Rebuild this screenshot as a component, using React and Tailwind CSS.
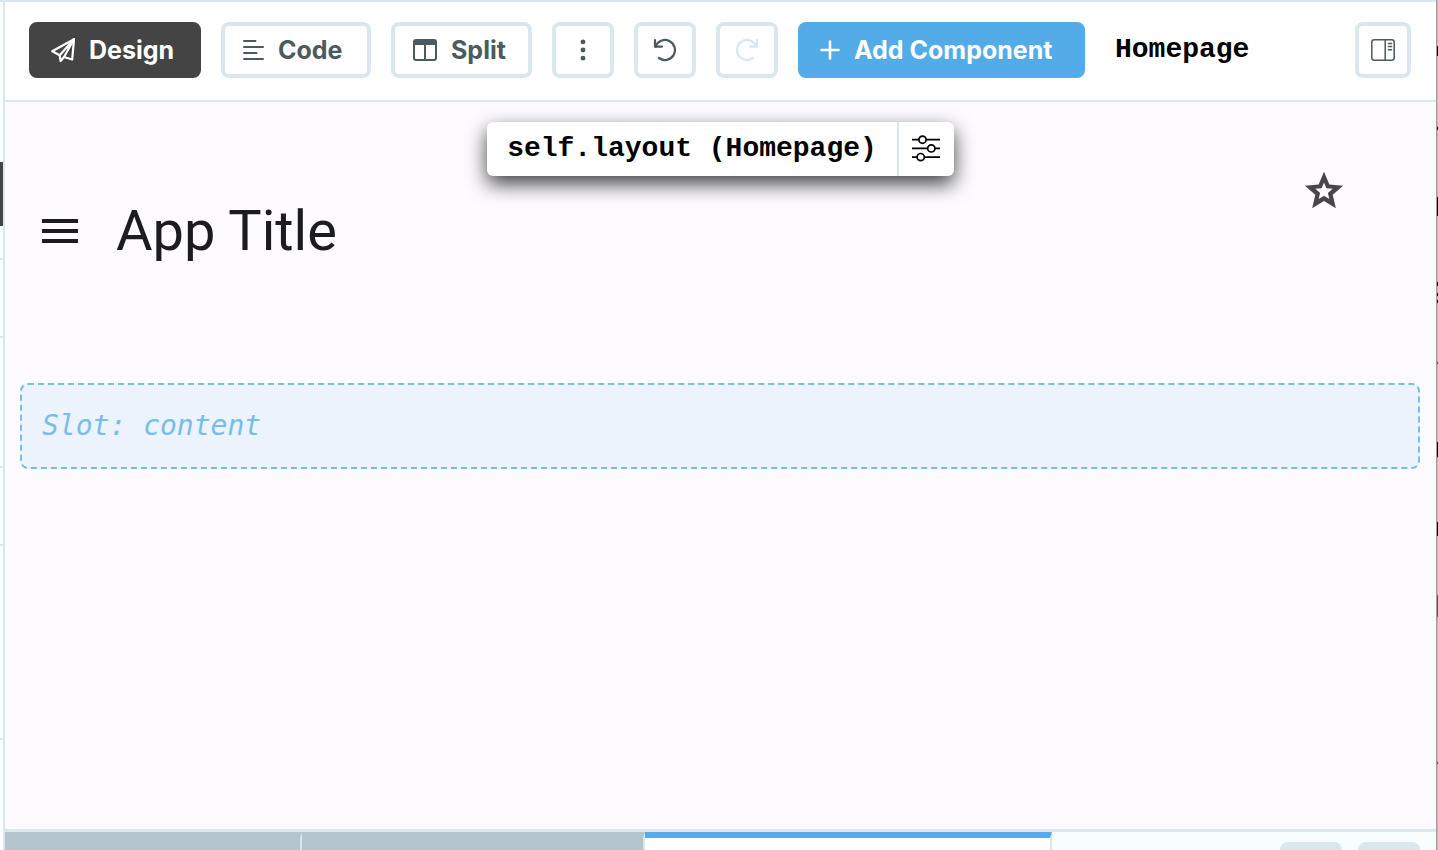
import React, { useState } from "react";
import { BsThreeDotsVertical } from "react-icons/bs";
import { MdMenu } from "react-icons/md";

const SendIcon = () => (
  <svg width="24" height="24" viewBox="0 0 24 24" fill="none" stroke="currentColor" strokeWidth="2.2" strokeLinejoin="round" strokeLinecap="round">
    <path d="M23 1.2 1.2 13.3 8.7 17.3 9.6 23 13 19 21.2 21.5Z" />
    <path d="M23 1.2 8.7 17.3M23 1.2 13 19" />
  </svg>
);

const CodeIcon = () => (
  <svg width="21" height="24" viewBox="0 0 21 24" fill="none" stroke="currentColor" strokeWidth="2" strokeLinecap="round">
    <path d="M1 3h11.5M1 9h19M1 15h12.5M1 21h19" />
  </svg>
);

const SplitIcon = () => (
  <svg width="24" height="24" viewBox="0 0 24 24" fill="none" stroke="currentColor" strokeWidth="2">
    <rect x="1" y="2" width="22" height="20" rx="2" />
    <path d="M1 5h22" strokeWidth="4" />
    <path d="M12 5v17" />
  </svg>
);

const UndoIcon = ({ className }) => (
  <svg className={className} width="24" height="24" viewBox="0 0 24 24" fill="none" stroke="currentColor" strokeWidth="2.2" strokeLinecap="round" strokeLinejoin="round">
    <path d="M2 2v6.6h7" />
    <path d="M2.6 8.6A10 10 0 1 1 6 20" />
  </svg>
);

const PlusIcon = () => (
  <svg width="20" height="24" viewBox="0 0 20 24" fill="none" stroke="currentColor" strokeWidth="2.6" strokeLinecap="round">
    <path d="M1.5 12h17M10 3.5v17" />
  </svg>
);

const SidebarIcon = () => (
  <svg width="24" height="24" viewBox="0 0 24 24" fill="none" stroke="currentColor" strokeWidth="1.5" strokeLinecap="round">
    <rect x="0.8" y="1.8" width="22.4" height="20.4" rx="2.4" />
    <path d="M14.2 2v20M17.4 5.4h3.2M17.4 8.6h3.2M17.4 11.8h3.2" />
  </svg>
);

const SlidersIcon = () => (
  <svg width="28" height="28" viewBox="0 0 28 28" fill="#fff" stroke="currentColor" strokeWidth="1.7">
    <path d="M0 4.7h28M0 13.4h28M0 22.1h28" />
    <circle cx="10.5" cy="4.7" r="3.6" />
    <circle cx="19.3" cy="13.4" r="3.6" />
    <circle cx="8.7" cy="22.1" r="3.6" />
  </svg>
);

const StarIcon = () => (
  <svg width="46" height="46" viewBox="0 0 24 24" fill="currentColor" fillRule="evenodd">
    <path d="M22 9.24 14.81 8.62 12 2 9.19 8.63 2 9.24 7.46 13.97 5.82 21 12 17.27 18.18 21 16.55 13.97ZM16.5 10.87 13.26 10.59 12 7.6 10.74 10.59 7.5 10.87 9.96 13 9.22 16.16 12 14.48 14.78 16.16 14.05 13Z" />
  </svg>
);

const views = [
  { name: "Design", icon: <SendIcon />, width: "w-[172px]" },
  { name: "Code", icon: <CodeIcon />, width: "w-[150px]" },
  { name: "Split", icon: <SplitIcon />, width: "w-[141px]" },
];

const iconButton =
  "flex h-14 w-[62px] shrink-0 items-center justify-center rounded-lg border-4 border-[#dae7ec] bg-white";

const Toolbar = () => {
  const [view, setView] = useState("Design");

  return (
    <header className="flex h-[102px] shrink-0 items-center gap-5 border-y-2 border-[#dae7ec] bg-white pr-[25px] pb-[2px] pl-6 text-[#4c5a60]">
      {views.map((item) => (
        <button
          key={item.name}
          type="button"
          onClick={() => setView(item.name)}
          className={`flex h-14 shrink-0 items-center gap-[14px] rounded-lg border-4 pl-[18px] text-[25px] leading-8 font-bold ${item.width} ${
            view === item.name
              ? "border-[#444444] bg-[#444444] text-white"
              : "border-[#dae7ec] bg-white"
          }`}
        >
          {item.icon}
          {item.name}
        </button>
      ))}
      <button type="button" aria-label="More" className={iconButton}>
        <BsThreeDotsVertical size={26} />
      </button>
      <button type="button" aria-label="Undo" className={iconButton}>
        <UndoIcon />
      </button>
      <button type="button" aria-label="Redo" disabled className={`${iconButton} text-[#dae7ec]`}>
        <UndoIcon className="-scale-x-100" />
      </button>
      <button
        type="button"
        className="flex h-14 w-[287px] shrink-0 items-center gap-[14px] rounded-lg bg-[#53ace8] pl-[22px] text-[25px] leading-8 font-bold whitespace-nowrap text-white"
      >
        <PlusIcon />
        Add Component
      </button>
      <h1 className="ml-[10px] font-['Liberation_Mono',monospace] text-[28px] leading-8 font-bold text-black">
        Homepage
      </h1>
      <button
        type="button"
        aria-label="Toggle sidebar"
        className="ml-auto flex size-14 shrink-0 items-center justify-center rounded-lg border-4 border-[#dae7ec] bg-white"
      >
        <SidebarIcon />
      </button>
    </header>
  );
};

const Designer = () => (
  <main className="relative min-h-0 flex-1 bg-[#fdfbff]">
    <div className="absolute inset-x-0 top-5 flex justify-center">
      <div className="flex h-[54px] rounded-md bg-white font-['Liberation_Mono',monospace] text-[28px] font-bold text-black shadow-[0_8px_20px_rgba(0,0,0,0.75)]">
        <span className="flex items-center border-r-2 border-[#dae7ec] px-5">
          self.layout (Homepage)
        </span>
        <button type="button" aria-label="Properties" className="flex w-[55px] items-center justify-center">
          <SlidersIcon />
        </button>
      </div>
    </div>

    <div className="flex h-[281px] items-start pt-[66px] pr-[89px] pl-[31px] font-[Roboto,sans-serif] text-[#1c1b1f]">
      <div className="mt-[39px] flex h-12 items-center gap-8">
        <button type="button" aria-label="Menu">
          <MdMenu size={48} />
        </button>
        <h2 className="text-[56px] leading-none">App Title</h2>
      </div>
      <button type="button" aria-label="Favorite" className="ml-auto text-[#49454f]">
        <StarIcon />
      </button>
    </div>

    <div className="mr-4 ml-[15px] flex h-[86px] items-center rounded-lg border-2 border-dashed border-[#77bdeb] bg-[#ebf3fc] px-5 font-['DejaVu_Sans_Mono',monospace] text-[28px] text-[#77bdeb] italic">
      Slot: content
    </div>
  </main>
);

const BottomTabs = () => (
  <footer className="flex h-[21px] shrink-0 overflow-hidden border-t-[3px] border-[#dae7ec] bg-[#f8fdff]">
    <div className="w-[297px] border-t-6 border-r-2 border-t-[#b4c4cc] border-r-[#dae7ec] bg-[#b4c4cc]" />
    <div className="w-[343px] border-t-6 border-r-2 border-t-[#b4c4cc] border-r-[#dae7ec] bg-[#b4c4cc]" />
    <div className="w-[407px] border-t-6 border-r-2 border-t-[#53ace8] border-r-[#dae7ec] bg-white" />
    <div className="ml-auto flex gap-4 pt-[10px] pr-4">
      <div className="h-14 w-[62px] rounded-lg bg-[#dae7ec]" />
      <div className="h-14 w-[62px] rounded-lg bg-[#dae7ec]" />
    </div>
  </footer>
);

// edge of the component tree that sits behind the designer
const TreeEdge = () => (
  <aside className="flex w-[5px] shrink-0 flex-col border-r-2 border-[#dae7ec] bg-[#fbfeff]">
    <div className="h-[2px] bg-[#dae7ec]" />
    <div className="h-40" />
    <div className="h-16 bg-[#444444]" />
    <div className="h-[34px] border-b-2 border-[#dae7ec]" />
    <div className="h-[78px] border-b-2 border-[#dae7ec]" />
    <div className="h-[130px] border-b-2 border-[#dae7ec]" />
    <div className="h-[78px] border-b-2 border-[#dae7ec]" />
    <div className="h-[194px] border-b-2 border-[#dae7ec]" />
  </aside>
);

const PageEdge = () => (
  <aside className="flex w-[2px] shrink-0 flex-col overflow-hidden border-l border-[#a0a0a0] bg-[#b8b8b8]">
    <div className="mt-[46px] h-[10px] shrink-0 bg-black" />
    <div className="mt-[71px] h-[3px] shrink-0 bg-black" />
    <div className="mt-[67px] h-[19px] shrink-0 bg-black" />
    <div className="mt-[66px] h-1 shrink-0 bg-black" />
    <div className="mt-[7px] h-[3px] shrink-0 bg-black" />
    <div className="mt-1 h-[3px] shrink-0 bg-black" />
    <div className="mt-[59px] h-[2px] shrink-0 bg-[#444444]" />
    <div className="mt-[78px] h-[15px] shrink-0 bg-black" />
    <div className="mt-[65px] h-[14px] shrink-0 bg-black" />
    <div className="mt-[59px] h-[22px] shrink-0 bg-[#555555]" />
    <div className="mt-[145px] h-[2px] shrink-0 bg-[#444444]" />
  </aside>
);

const App = () => {
  return (
    <div className="flex h-screen overflow-hidden bg-white font-[Inter,sans-serif]">
      <TreeEdge />
      <div className="flex min-w-0 flex-1 flex-col">
        <Toolbar />
        <Designer />
        <BottomTabs />
      </div>
      <PageEdge />
    </div>
  );
};

export default App;
